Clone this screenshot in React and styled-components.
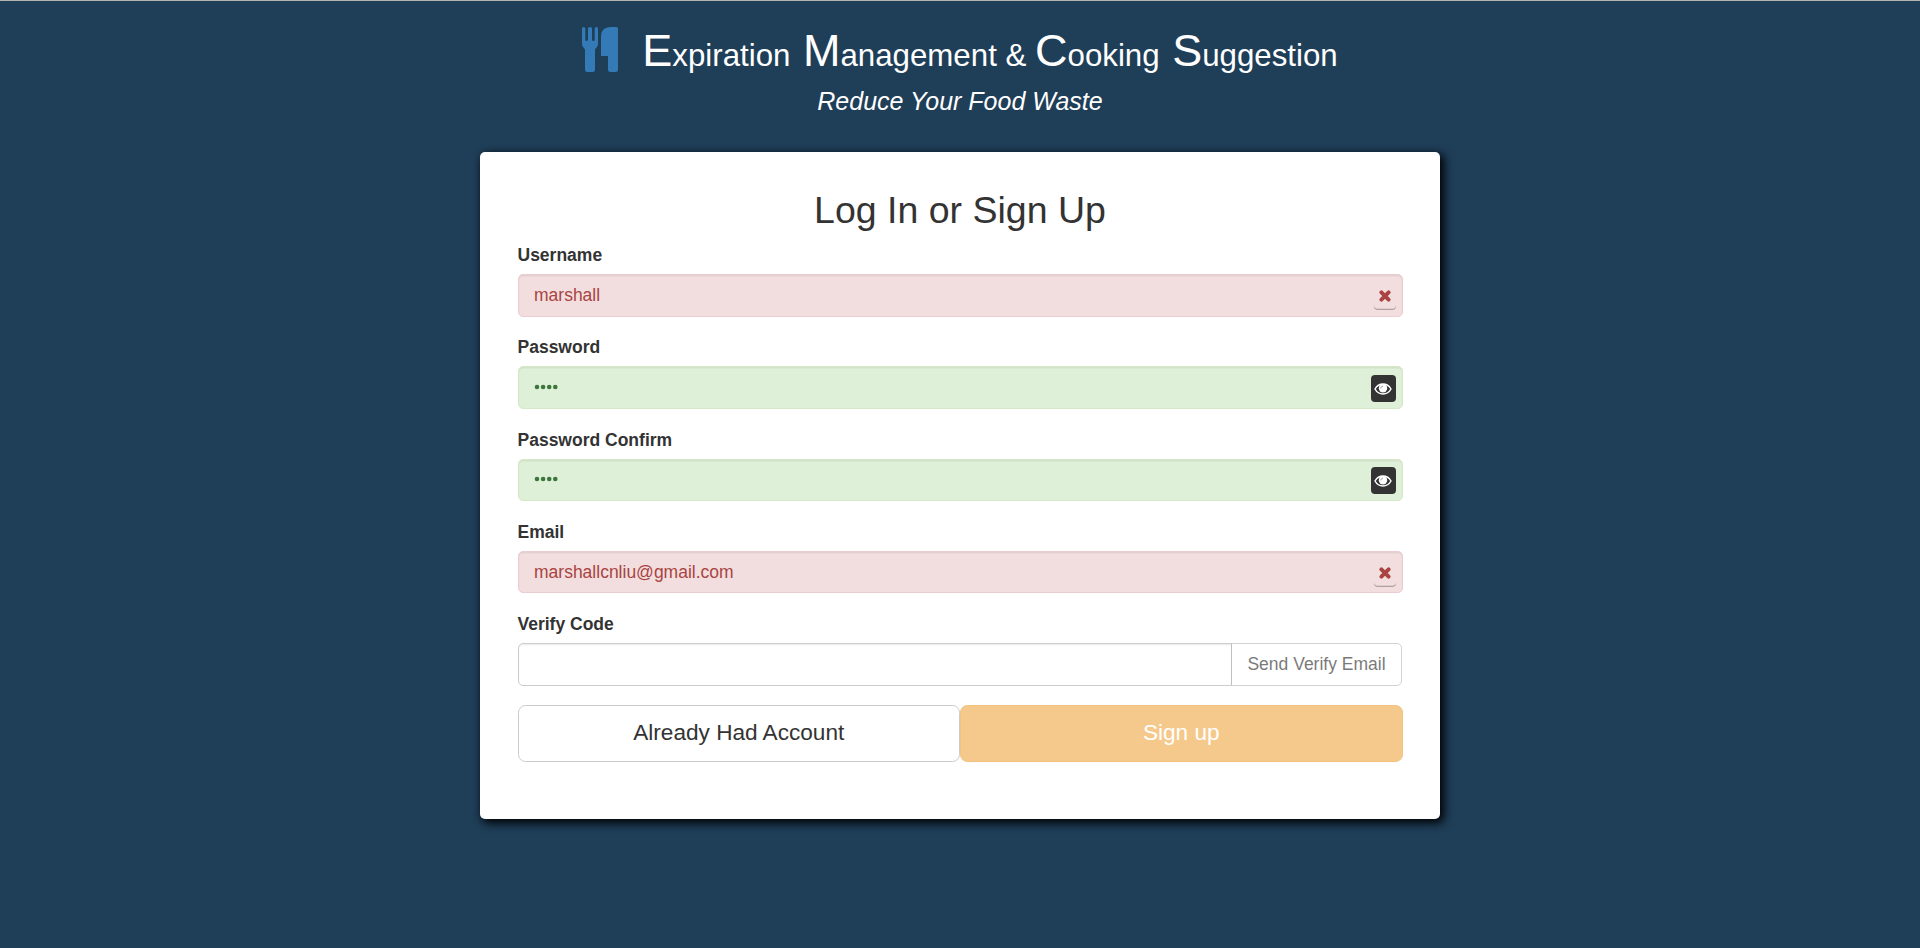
import React from "react";
import styled, { createGlobalStyle, css } from "styled-components";

const GlobalStyle = createGlobalStyle`
  *, *::before, *::after { box-sizing: border-box; }
  body {
    margin: 0;
    background: #1f3e58;
    color: #333;
    font-family: "Liberation Sans", Arial, Helvetica, sans-serif;
    font-size: 17.5px;
    line-height: 25px;
  }
`;

const Page = styled.div`
  height: 948px;
  overflow: hidden;
  display: flex;
  flex-direction: column;
  align-items: center;
  border-top: 1px solid #b5b5b0;
`;

const Header = styled.header`
  height: 151px;
  padding-top: 25px;
  color: #fff;
  display: flex;
  flex-direction: column;
  align-items: center;
`;

const Brand = styled.h1`
  margin: 0;
  height: 50px;
  display: flex;
  align-items: flex-start;
  gap: 23px;
  margin-left: -1px;
  font-size: 31.25px;
  font-weight: 400;
  line-height: 50px;
  white-space: pre;
`;

const Initial = styled.span`
  font-size: 45px;
`;

const Cutlery = styled.svg`
  width: 38px;
  height: 47px;
  fill: #337ab7;
`;

const Tagline = styled.p`
  margin: 11px 0 0;
  font-size: 25px;
  line-height: 28px;
  font-style: italic;
`;

const Card = styled.main`
  width: 960px;
  height: 667px;
  padding: 37px 37.5px 0;
  background: #fff;
  border-radius: 5px;
  box-shadow: 3px 3px 10px 1px #000;
`;

const Title = styled.h2`
  margin: 0 0 12px;
  font-size: 37.5px;
  font-weight: 400;
  line-height: 42px;
  text-align: center;
`;

const Field = styled.div`
  height: 92.25px;
`;

const Label = styled.label`
  display: block;
  height: 31px;
  font-weight: 700;
`;

const tones = {
  error: css`
    background: #f2dede;
    border-color: #ebccd1;
    color: #a94442;
  `,
  success: css`
    background: #dff0d8;
    border-color: #d6e9c6;
    color: #3c763d;
  `,
  plain: css`
    background: #fff;
    border-color: #ccc;
    color: #555;
  `,
};

const InputRow = styled.div`
  display: flex;
  height: 42.5px;
`;

const InputBox = styled.div`
  flex: 1;
  display: flex;
  align-items: center;
  justify-content: space-between;
  padding: 0 6px 0 15.5px;
  border: 1px solid;
  border-radius: ${(p) => (p.$joined ? "5px 0 0 5px" : "5px")};
  box-shadow: inset 0 1.25px 1.25px rgba(0, 0, 0, 0.075);
  ${(p) => tones[p.$tone]}
`;

const Value = styled.span`
  margin-top: 0.2px;
`;

const Dots = styled.svg`
  width: 26px;
  height: 6px;
  margin-top: -1px;
  fill: #3c763d;
`;

const IconBadge = styled.button`
  display: flex;
  align-items: center;
  justify-content: center;
  padding: 0;
  border: 0;
  border-radius: 4px;
  ${(p) =>
    p.$dark
      ? css`
          width: 25px;
          height: 27px;
          margin-top: 2px;
          background: #333;
          color: #fff;
        `
      : css`
          width: 22px;
          height: 27px;
          margin-top: 2px;
          background: transparent;
          color: #a94442;
          box-shadow: inset 0 -1.25px 0 rgba(0, 0, 0, 0.28);
        `}
`;

const SendButton = styled.button`
  width: 171px;
  margin: 0 1px 0 -1px;
  padding: 0 0 0 1px;
  border: 1px solid #bbb;
  border-radius: 0 5px 5px 0;
  background: #fff;
  color: #333;
  font: inherit;
  opacity: 0.65;
`;

const Actions = styled.div`
  display: flex;
  height: 57px;
  margin-top: 1px;
`;

const ActionButton = styled.button`
  flex: 1;
  padding: 0 0 1px;
  border: 1px solid ${(p) => (p.$primary ? "#eea236" : "#ccc")};
  border-radius: 7.5px;
  background: ${(p) => (p.$primary ? "#f0ad4e" : "#fff")};
  color: ${(p) => (p.$primary ? "#fff" : "#333")};
  opacity: ${(p) => (p.$primary ? 0.65 : 1)};
  font-family: inherit;
  font-size: 22.6px;
`;

const PasswordDots = () => (
  <Dots viewBox="0 0 26 6">
    {[3, 9.1, 15.2, 21.3].map((x) => (
      <circle key={x} cx={x} cy="3" r="2.3" />
    ))}
  </Dots>
);

const CrossIcon = () => (
  <svg width="12" height="12" viewBox="0 0 12 12">
    <path d="M2.4 2.4L9.6 9.6M9.6 2.4L2.4 9.6" stroke="currentColor" strokeWidth="3.9" strokeLinecap="round" />
  </svg>
);

const EyeIcon = () => (
  <svg width="18" height="12" viewBox="0 0 18 12" fill="none">
    <path d="M1 6C2.8 2.8 5.6 1 9 1s6.200 1.800 8 5C15.200 9.200 12.400 11 9 11S2.800 9.200 1 6Z" stroke="currentColor" strokeWidth="1.500" />
    <circle cx="9" cy="5.300" r="4.200" fill="currentColor" />
    <path d="M6.900 5C7 4 7.700 3.300 8.600 3.200" stroke="#777" strokeWidth="0.800" strokeLinecap="round" />
  </svg>
);

const fields = [
  { label: "Username", tone: "error", value: "marshall" },
  { label: "Password", tone: "success" },
  { label: "Password Confirm", tone: "success" },
  { label: "Email", tone: "error", value: "marshallcnliu@gmail.com" },
];

export default function App() {
  return (
    <>
      <GlobalStyle />
      <Page>
        <Header>
          <Brand>
            <Cutlery viewBox="0 0 38 47">
              <path d="M1 2.500Q1 1 2.600 1T4.300 2.500V13.500Q4.300 15 5.500 15T7 13.500V2.500Q7 1 9 1T11 2.500V13.500Q11 15 12.300 15T13.700 13.500V2.500Q13.700 1 15.400 1T17 2.500V18Q17 20.500 15.500 21.500Q14 22.500 14 24V43.500Q14 46 11.500 46H6.500Q4 46 4 43.500V24Q4 22.500 2.500 21.500Q1 20.500 1 18Z" />
              <path d="M20 30V11Q20 1 29.500 1H35.500Q37 1 37 2.500V43.500Q37 46 34.500 46H29.500Q27 46 27 43.500V30Z" />
            </Cutlery>
            <span>
              <Initial>E</Initial>xpiration<Initial> M</Initial>anagement &amp; <Initial>C</Initial>ooking<Initial> S</Initial>uggestion
            </span>
          </Brand>
          <Tagline>Reduce Your Food Waste</Tagline>
        </Header>
        <Card>
          <Title>Log In or Sign Up</Title>
          {fields.map((f) => (
            <Field key={f.label}>
              <Label>{f.label}</Label>
              <InputRow>
                <InputBox $tone={f.tone}>
                  {f.value ? <Value>{f.value}</Value> : <PasswordDots />}
                  <IconBadge $dark={!f.value}>{f.value ? <CrossIcon /> : <EyeIcon />}</IconBadge>
                </InputBox>
              </InputRow>
            </Field>
          ))}
          <Field>
            <Label>Verify Code</Label>
            <InputRow>
              <InputBox $tone="plain" $joined />
              <SendButton>Send Verify Email</SendButton>
            </InputRow>
          </Field>
          <Actions>
            <ActionButton>Already Had Account</ActionButton>
            <ActionButton $primary>Sign up</ActionButton>
          </Actions>
        </Card>
      </Page>
    </>
  );
}
